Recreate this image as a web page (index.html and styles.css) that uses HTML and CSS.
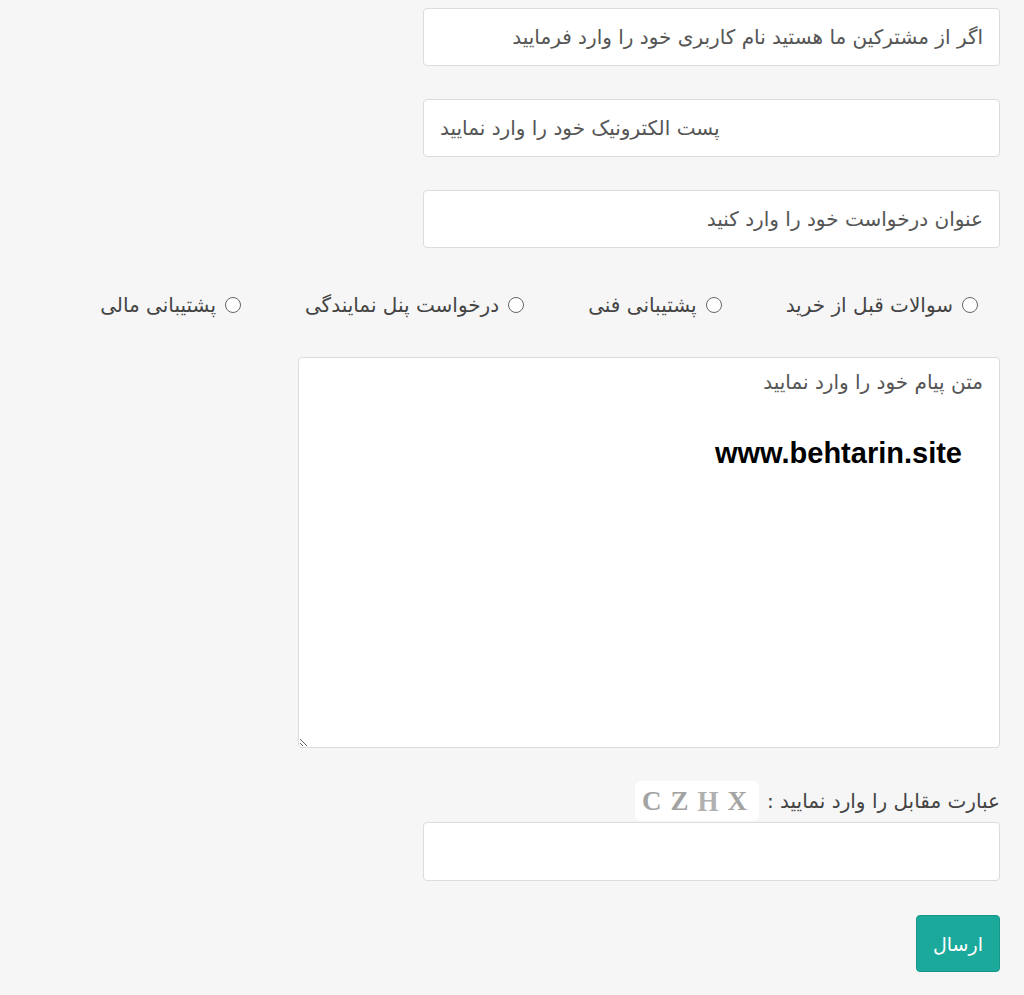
FILE: index.html
```html
<!DOCTYPE html>
<html lang="fa" dir="rtl">
<head>
<meta charset="utf-8">
<link rel="stylesheet" href="styles.css">
</head>
<body>
<form class="ticket">
  <input class="field" type="text" placeholder="اگر از مشترکین ما هستید نام کاربری خود را وارد فرمایید">
  <input class="field email" type="email" dir="ltr" placeholder="پست الکترونیک خود را وارد نمایید">
  <input class="field" type="text" placeholder="عنوان درخواست خود را وارد کنید">
  <div class="radios">
    <label class="radio"><span class="dot"></span>سوالات قبل از خرید</label>
    <label class="radio"><span class="dot"></span>پشتیبانی فنی</label>
    <label class="radio"><span class="dot"></span>درخواست پنل نمایندگی</label>
    <label class="radio"><span class="dot"></span>پشتیبانی مالی</label>
  </div>
  <div class="msg-wrap">
    <textarea class="message" placeholder="متن پیام خود را وارد نمایید"></textarea>
    <span class="watermark">www.behtarin.site</span>
  </div>
  <div class="captcha-row">
    <span class="captcha-label">عبارت مقابل را وارد نمایید :</span>
    <span class="captcha"><b>C</b><b>Z</b><b class="tall">H</b><b>X</b></span>
  </div>
  <input class="field captcha-input" type="text">
  <div class="actions">
    <button class="send" type="button">ارسال</button>
  </div>
</form>
</body>
</html>
```
FILE: styles.css
```css
html, body {
  margin: 0;
  padding: 0;
  background: #f6f6f6;
}
body {
  font-family: "DejaVu Sans", "Noto Sans", sans-serif;
  color: #555;
  height: 995px;
  overflow: hidden;
}
.ticket {
  display: flex;
  flex-direction: column;
  align-items: flex-start;
  padding: 8px 24px 0 24px;
}
.field {
  box-sizing: border-box;
  width: 577px;
  height: 58px;
  border: 1px solid #dcdcdc;
  border-radius: 4px;
  background: #fff;
  padding: 0 16px;
  font-family: inherit;
  font-size: 20px;
  color: #555;
  margin: 0 0 33px 0;
  outline: none;
}
.field::placeholder {
  color: #555;
  opacity: 1;
}
.email {
  text-align: left;
}
.radios {
  display: flex;
  gap: 64px;
  padding: 0 22px 0 0;
  margin: -1px 0 27px 0;
  height: 50px;
  align-items: center;
  font-size: 20px;
  color: #444;
}
.radio {
  display: flex;
  align-items: center;
  gap: 9px;
  white-space: nowrap;
}
.dot {
  width: 14px;
  height: 14px;
  border: 1.5px solid #666;
  border-radius: 50%;
  background: #fff;
  flex: none;
}
.msg-wrap {
  position: relative;
  width: 702px;
  height: 391px;
  margin-bottom: 33px;
}
.message {
  box-sizing: border-box;
  width: 702px;
  height: 391px;
  border: 1px solid #dcdcdc;
  border-radius: 4px;
  background: #fff;
  padding: 12px 16px;
  font-family: inherit;
  font-size: 20px;
  color: #555;
  resize: both;
  outline: none;
  display: block;
}
.message::placeholder {
  color: #555;
  opacity: 1;
}
.watermark {
  position: absolute;
  top: 80px;
  right: 38px;
  direction: ltr;
  font-family: "Liberation Sans", Arial, sans-serif;
  font-weight: bold;
  font-size: 29px;
  color: #000;
}
.captcha-row {
  display: flex;
  align-items: center;
  gap: 8px;
  height: 40px;
  font-size: 20px;
  color: #444;
}
.captcha {
  direction: ltr;
  box-sizing: border-box;
  background: #fff;
  border-radius: 6px;
  width: 124px;
  height: 40px;
  padding-left: 7px;
  display: flex;
  align-items: center;
  justify-content: flex-start;
  gap: 9px;
  font-family: "Liberation Serif", serif;
  font-size: 27px;
  color: #a3a3a3;
}
.captcha .tall { transform: scaleY(1.1); color: #b0b0b0; }
.captcha-input {
  margin: 1px 0 34px 0;
  height: 59px;
}
.actions {
  display: flex;
}
.send {
  width: 84px;
  height: 57px;
  border: 1px solid #169688;
  border-radius: 4px;
  background: #1aa99b;
  color: #fff;
  font-family: inherit;
  font-size: 19px;
}
```
